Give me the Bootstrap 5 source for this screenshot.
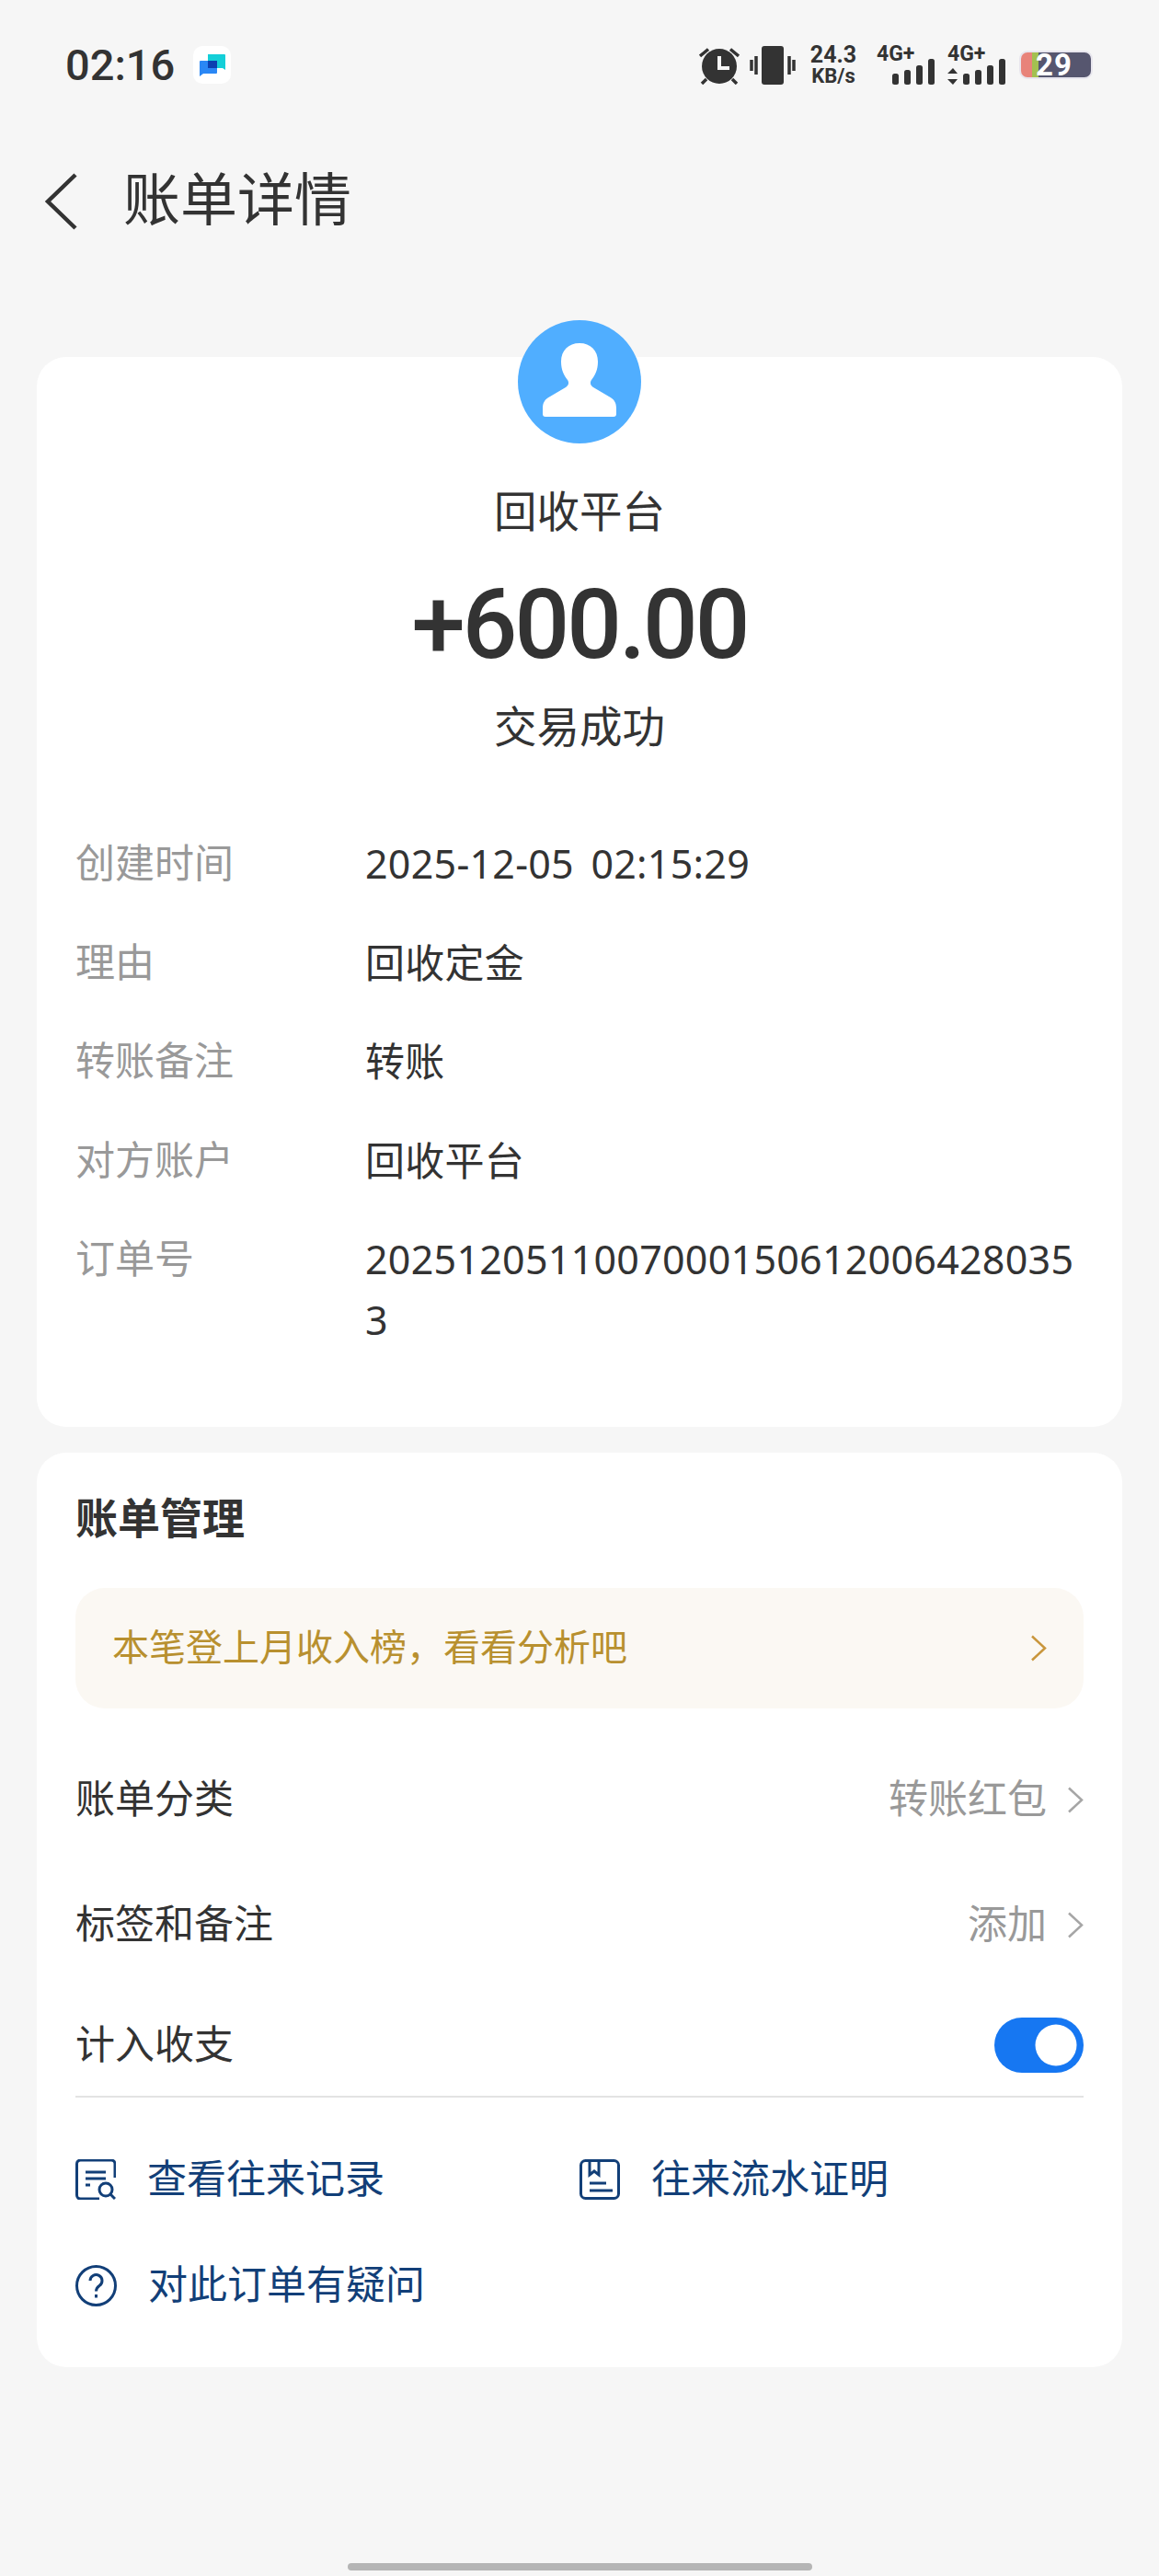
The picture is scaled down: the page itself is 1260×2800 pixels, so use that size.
<!DOCTYPE html>
<html lang="zh-CN">
<head>
  <meta charset="UTF-8" />
  <meta name="viewport" content="width=device-width, initial-scale=1" />
  <title>账单详情</title>
  <link href="https://cdn.jsdelivr.net/npm/bootstrap@5.3.2/dist/css/bootstrap.min.css" rel="stylesheet" />
  <style>
    body { background: #f6f6f6; color: #333; font-family: "Roboto", "Noto Sans CJK SC", sans-serif; font-size: 43px; line-height: 66px; }
    .phone-page { min-height: 2800px; }

    .status-bar { height: 47px; margin-top: 47px; padding: 0 73px 0 71px; }
    .status-time { font-size: 47px; line-height: 56px; font-weight: 500; }
    .app-badge { width: 41px; height: 41px; background: #fff; border-radius: 10px; margin-left: 20px; }
    .status-icons { column-gap: 14px; }
    .alarm-icon { margin-right: -3px; }
    .status-speed { width: 54px; margin: 0 6px 0 0; font-weight: 700; text-align: center; }
    .status-speed div:first-child { font-size: 25px; line-height: 24px; }
    .status-speed div:last-child { font-size: 22px; line-height: 22px; }
    .signal-icon { margin-top: -6px; }
    .signal-text { font-family: "Roboto", sans-serif; font-size: 23px; font-weight: 700; fill: #333; }
    .batt { width: 78px; height: 29px; margin-left: 2px; border-radius: 8px; background: #56566f; outline: 2px solid #e8e6ee; outline-offset: -1px; color: #fff; font-size: 33px; line-height: 29px; font-weight: 700; }
    .batt-red { width: 13px; background: #e8837a; border-radius: 8px 0 0 8px; }
    .batt-green { width: 7px; background: #a3c050; }
    .batt-num { margin-left: -3px; letter-spacing: 1px; }

    .title-bar { height: 92px; margin-top: 79px; padding-left: 48px; }
    .title-bar h1 { font-size: 62px; line-height: 92px; font-weight: 400; margin: 0 0 0 50px; color: #333; }

    .bill-card { margin: 123px 40px 0; border-radius: 32px; background: #fff; }
    .avatar-round { width: 134px; height: 134px; margin: -40px auto 0; }
    .payee { margin-top: 42px; font-size: 46.5px; }
    .amount { margin-top: 30px; font-size: 105px; line-height: 120px; font-weight: 500; letter-spacing: -3px; }
    .trade-state { margin-top: 18px; font-size: 46.5px; }

    .detail-list { margin-top: 82px; padding: 0 42px 83px; row-gap: 41.5px; }
    .detail-key { width: 315px; flex: none; color: #999; }
    .detail-val { min-width: 0; overflow-wrap: anywhere; font-family: "Noto Sans", "Noto Sans CJK SC", sans-serif; letter-spacing: 0.25px; word-spacing: 7px; }

    .manage-card { margin: 28px 40px 0; padding: 39px 42px 56px; border-radius: 32px; background: #fff; }
    .manage-title { font-size: 46px; font-weight: 700; }
    .rank-banner { height: 131px; margin-top: 42px; padding: 0 40px; border-radius: 32px; background: #fbf8f3; color: #b8902f; font-size: 40px; }
    .manage-row { height: 66px; }
    .row-first { margin-top: 66px; }
    .row-second { margin-top: 70px; }
    .row-third { margin-top: 65px; }
    .row-hint { color: #999; }
    .row-hint svg { margin-left: 22px; }
    .bill-switch { min-height: 0; margin: 0; padding: 0; }
    .bill-switch .form-check-input { width: 97px; height: 60px; margin: 0; float: none; display: block; border: 0; background-color: #1677f2; }
    .row-rule { height: 2px; margin-top: 22px; background: #e3e3e3; }
    .link-row { margin-top: 56px; color: #123f78; }
    .link-row-next { margin-top: 49px; }
    .link-item { gap: 34px; }

    .home-bar { width: 505px; height: 8px; margin: auto auto 6px; border-radius: 4px; background: #b5b5b5; }
  </style>
</head>
<body>
  <div class="phone-page d-flex flex-column">

    <div class="status-bar d-flex align-items-center">
      <span class="status-time">02:16</span>
      <span class="app-badge d-flex align-items-center justify-content-center">
        <svg width="30" height="26" viewBox="0 0 30 26">
          <path d="M10 1h18a1 1 0 0 1 1 1v16l-3-2H10z" fill="#14cfd8"/>
          <path d="M2 8h17a1 1 0 0 1 1 1v12a1 1 0 0 1-1 1H5l-4 3V9a1 1 0 0 1 1-1z" fill="#2a87f5"/>
          <rect x="10" y="8" width="10" height="8" fill="#0c3fb0"/>
        </svg>
      </span>
      <div class="status-icons ms-auto d-flex align-items-center">
        <svg class="alarm-icon" width="44" height="42" viewBox="0 0 44 42">
          <circle cx="22" cy="22" r="19" fill="#333"/>
          <path d="M20 11h4v11h9v4H20z" fill="#f6f6f6"/>
          <path d="M1 11 10 3.500M43 11 34 3.500M8 36l-5 5M36 36l5 5" stroke="#333" stroke-width="3.500"/>
        </svg>
        <svg width="50" height="42" viewBox="0 0 50 42">
          <rect x="13" y="0" width="24" height="42" rx="3" fill="#333"/>
          <path d="M7 11v20M2 15v12M43 11v20M48 15v12" stroke="#333" stroke-width="3.500"/>
        </svg>
        <div class="status-speed">
          <div>24.3</div>
          <div>KB/s</div>
        </div>
        <svg class="signal-icon" width="63" height="48" viewBox="0 -6 63 48">
          <text class="signal-text" x="0" y="16">4G+</text>
          <rect x="17" y="30" width="7" height="12" rx="2.500" fill="#333"/>
          <rect x="30" y="26" width="7" height="16" rx="2.500" fill="#333"/>
          <rect x="43" y="21" width="7" height="21" rx="2.500" fill="#333"/>
          <rect x="56" y="14" width="7" height="28" rx="2.500" fill="#333"/>
        </svg>
        <svg class="signal-icon" width="63" height="48" viewBox="0 -6 63 48">
          <text class="signal-text" x="0" y="16">4G+</text>
          <path d="M6 24l5 6H0zM6 42l5-6H0z" fill="#333"/>
          <rect x="17" y="30" width="7" height="12" rx="2.500" fill="#333"/>
          <rect x="30" y="26" width="7" height="16" rx="2.500" fill="#333"/>
          <rect x="43" y="21" width="7" height="21" rx="2.500" fill="#333"/>
          <rect x="56" y="14" width="7" height="28" rx="2.500" fill="#333"/>
        </svg>
        <div class="batt d-flex">
          <span class="batt-red"></span>
          <span class="batt-green"></span>
          <span class="batt-num">29</span>
        </div>
      </div>
    </div>

    <div class="title-bar d-flex align-items-center">
      <svg width="36" height="62" viewBox="0 0 36 62">
        <path d="M34 2 4 31l30 29" fill="none" stroke="#333" stroke-width="4.500"/>
      </svg>
      <h1>账单详情</h1>
    </div>

    <div class="card border-0 bill-card">
      <div class="avatar-round">
        <svg width="134" height="134" viewBox="0 0 134 134">
          <circle cx="67" cy="67" r="67" fill="#50aeff"/>
          <path d="M67 25C55 25 47 33 47 45C47 54 50 60 54 65C56 68 55 71 52 73L35 83C29 86 27 90 27 96L27 102Q27 105 30 105L104 105Q107 105 107 102L107 96C107 90 105 86 99 83L82 73C79 71 78 68 80 65C84 60 87 54 87 45C87 33 79 25 67 25Z" fill="#fff"/>
        </svg>
      </div>
      <div class="payee text-center">回收平台</div>
      <div class="amount text-center">+600.00</div>
      <div class="trade-state text-center">交易成功</div>
      <div class="detail-list d-flex flex-column">
        <div class="d-flex"><div class="detail-key">创建时间</div><div class="detail-val">2025-12-05 02:15:29</div></div>
        <div class="d-flex"><div class="detail-key">理由</div><div class="detail-val">回收定金</div></div>
        <div class="d-flex"><div class="detail-key">转账备注</div><div class="detail-val">转账</div></div>
        <div class="d-flex"><div class="detail-key">对方账户</div><div class="detail-val">回收平台</div></div>
        <div class="d-flex"><div class="detail-key">订单号</div><div class="detail-val">20251205110070001506120064280353</div></div>
      </div>
    </div>

    <div class="card border-0 manage-card">
      <div class="manage-title">账单管理</div>
      <div class="rank-banner d-flex align-items-center justify-content-between">
        <span>本笔登上月收入榜，看看分析吧</span>
        <svg width="18" height="29" viewBox="0 0 18 29"><path d="M2 1.500 16 14.500 2 27.500" fill="none" stroke="#c9963c" stroke-width="2.500"/></svg>
      </div>
      <div class="manage-row row-first d-flex align-items-center justify-content-between">
        <span>账单分类</span>
        <span class="row-hint d-flex align-items-center">转账红包
          <svg width="18" height="29" viewBox="0 0 18 29"><path d="M2 1.500 16 14.500 2 27.500" fill="none" stroke="#a6a6a6" stroke-width="2.500"/></svg>
        </span>
      </div>
      <div class="manage-row row-second d-flex align-items-center justify-content-between">
        <span>标签和备注</span>
        <span class="row-hint d-flex align-items-center">添加
          <svg width="18" height="29" viewBox="0 0 18 29"><path d="M2 1.500 16 14.500 2 27.500" fill="none" stroke="#a6a6a6" stroke-width="2.500"/></svg>
        </span>
      </div>
      <div class="manage-row row-third d-flex align-items-center justify-content-between">
        <span>计入收支</span>
        <div class="form-check form-switch bill-switch">
          <input class="form-check-input" type="checkbox" role="switch" checked aria-label="计入收支" />
        </div>
      </div>
      <div class="row-rule"></div>
      <div class="row g-0 link-row">
        <div class="col-6 d-flex align-items-center link-item">
          <svg width="44" height="44" viewBox="0 0 44 44" fill="none" stroke="#123f78" stroke-width="3">
            <path d="M43 20V5a4 4 0 0 0-4-4H5.500a4 4 0 0 0-4 4v34a4 4 0 0 0 4 4H26"/>
            <path d="M11 14h22M11 21h22M11 28h5"/>
            <circle cx="33" cy="33" r="7"/>
            <path d="m38 38 5 5"/>
          </svg>
          <span>查看往来记录</span>
        </div>
        <div class="col-6 d-flex align-items-center link-item">
          <svg width="44" height="44" viewBox="0 0 44 44" fill="none" stroke="#123f78" stroke-width="3">
            <rect x="1.500" y="1.500" width="41" height="41" rx="5"/>
            <path d="M11 2v15l5-4 5 4V2M11 26h18M11 34h25"/>
          </svg>
          <span>往来流水证明</span>
        </div>
      </div>
      <div class="row g-0 link-row link-row-next">
        <div class="col-12 d-flex align-items-center link-item">
          <svg width="45" height="45" viewBox="0 0 45 45" fill="none" stroke="#123f78" stroke-width="3">
            <circle cx="22.500" cy="22.500" r="21"/>
            <path d="M16 17a6.500 6.500 0 1 1 10 5.500c-2.500 1.800-3.500 3-3.500 6"/>
            <path d="M22.500 32v3.500"/>
          </svg>
          <span>对此订单有疑问</span>
        </div>
      </div>
    </div>

    <div class="home-bar"></div>
  </div>
  <script src="https://cdn.jsdelivr.net/npm/bootstrap@5.3.2/dist/js/bootstrap.bundle.min.js"></script>
</body>
</html>
